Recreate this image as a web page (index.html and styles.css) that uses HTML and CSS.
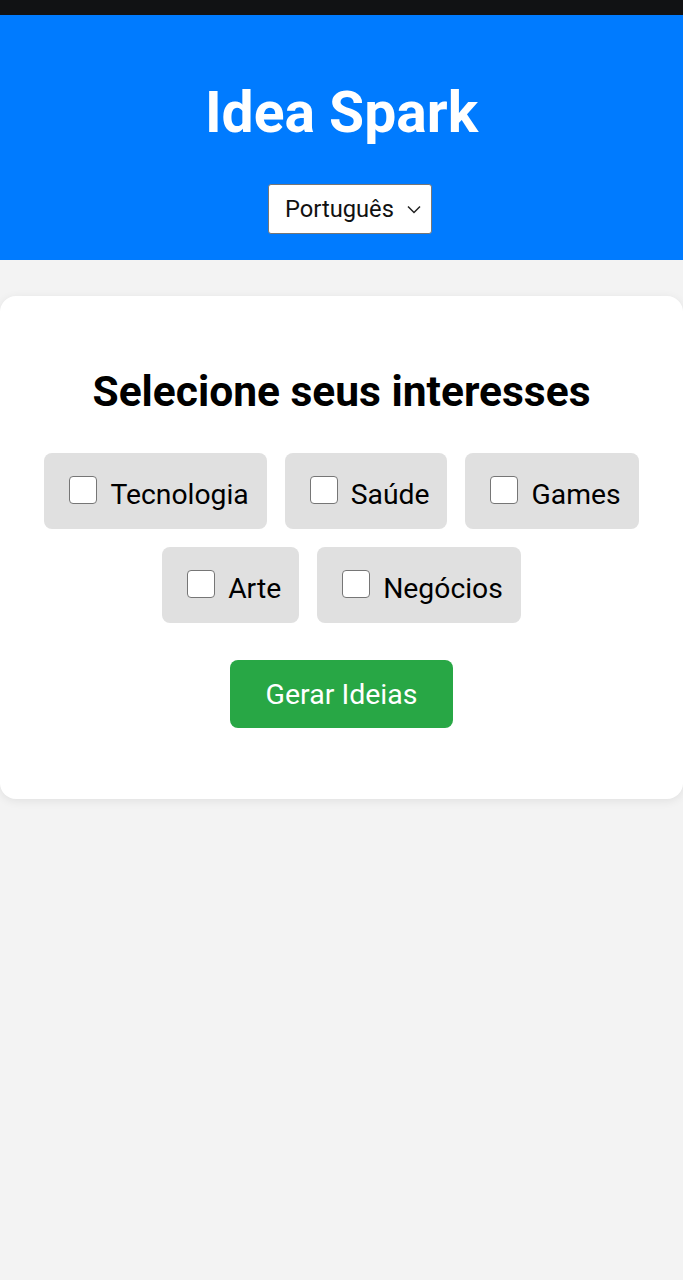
FILE: index.html
```html
<!DOCTYPE html>
<html lang="pt">
<head>
<meta charset="utf-8">
<title>Idea Spark</title>
<link rel="stylesheet" href="styles.css">
</head>
<body>
<div class="statusbar"></div>
<header class="header">
  <h1 class="title">Idea Spark</h1>
  <div class="select">
    <span class="select-text">Português</span>
    <svg class="chev" width="14" height="9" viewBox="0 0 14 9"><path d="M1 1.5 L7 7.5 L13 1.5" fill="none" stroke="#222" stroke-width="1.5"/></svg>
  </div>
</header>
<main class="card">
  <h2 class="heading">Selecione seus interesses</h2>
  <div class="options">
    <label class="opt"><span class="box"></span><span class="opt-text">Tecnologia</span></label>
    <label class="opt"><span class="box"></span><span class="opt-text">Saúde</span></label>
    <label class="opt"><span class="box"></span><span class="opt-text">Games</span></label>
    <label class="opt"><span class="box"></span><span class="opt-text">Arte</span></label>
    <label class="opt"><span class="box"></span><span class="opt-text">Negócios</span></label>
  </div>
  <div class="actions">
    <button class="btn">Gerar Ideias</button>
  </div>
</main>
</body>
</html>
```
FILE: styles.css
```css
* { box-sizing: border-box; }
html, body { margin: 0; padding: 0; }
body {
  background: #f3f3f3;
  font-family: Roboto, "Liberation Sans", sans-serif;
  color: #000;
  width: 683px;
  min-height: 1280px;
}
.statusbar { height: 15px; background: #111214; }
.header {
  background: #007bff;
  height: 245px;
  display: flex;
  flex-direction: column;
  align-items: center;
  padding-top: 65px;
}
.title {
  margin: 0;
  color: #fff;
  font-size: 57px;
  font-weight: 700;
  line-height: 66px;
}
.select {
  margin-top: 38px;
  margin-left: 17px;
  width: 164px;
  height: 50px;
  background: #fff;
  border: 1px solid #767676;
  border-radius: 3px;
  display: flex;
  align-items: center;
  justify-content: space-between;
  padding: 0 10px 0 16px;
}
.select-text { font-size: 23.7px; color: #111; }
.chev { display: block; }
.card {
  margin-top: 36px;
  background: #fff;
  border-radius: 16px;
  box-shadow: 0 2px 10px rgba(0,0,0,0.08);
  padding: 71px 0 71px;
  height: 503px;
}
.heading {
  margin: 0;
  text-align: center;
  font-size: 42.5px;
  font-weight: 700;
  line-height: 50px;
}
.options {
  margin-top: 36px;
  display: flex;
  flex-wrap: wrap;
  justify-content: center;
  gap: 18px;
  padding: 0 40px;
}
.opt {
  background: #e0e0e0;
  border-radius: 8px;
  height: 76px;
  display: flex;
  align-items: center;
  padding: 0 18px 0 25px;
  font-size: 28.3px;
  gap: 13px;
}
.opt-text { padding-top: 6px; }
.box {
  width: 28px;
  height: 28px;
  border: 1.5px solid #767676;
  border-radius: 4px;
  background: #fff;
  margin-top: -3px;
}
.actions { display: flex; justify-content: center; margin-top: 37px; }
.btn {
  background: #28a745;
  color: #fff;
  border: 0;
  border-radius: 8px;
  width: 223px;
  height: 68px;
  font-family: inherit;
  font-size: 28.5px;
}
```
